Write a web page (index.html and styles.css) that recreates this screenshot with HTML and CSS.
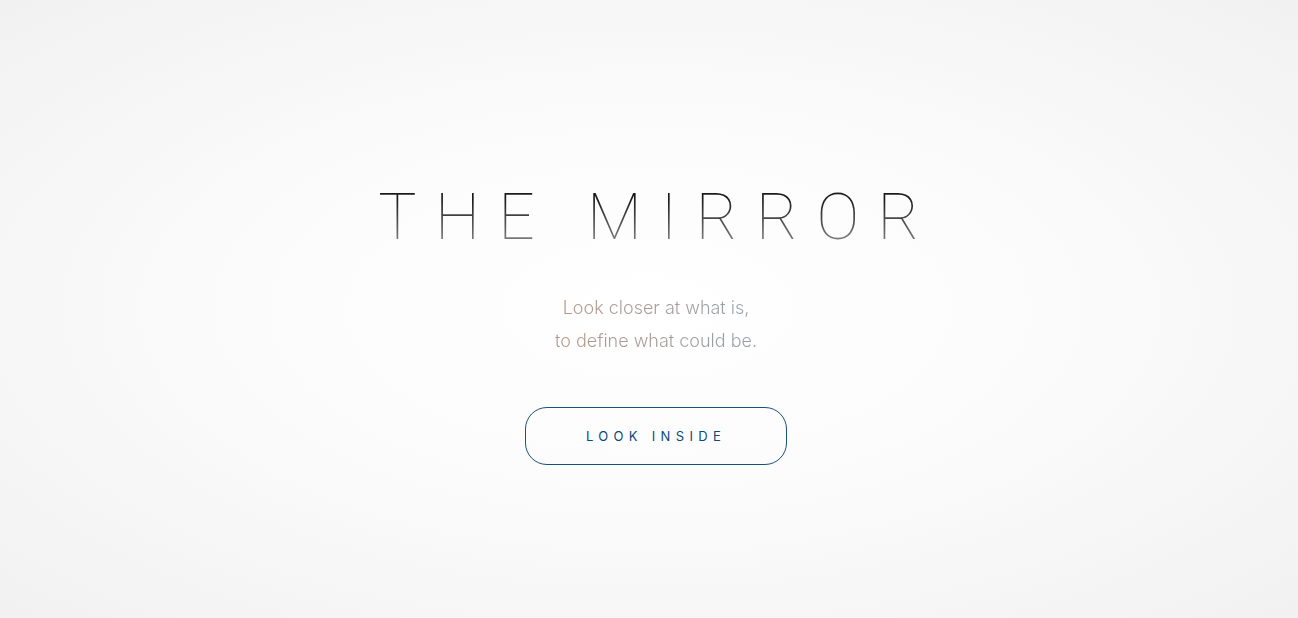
FILE: index.html
```html
<!DOCTYPE html>
<html lang="en">
<head>
<meta charset="utf-8">
<title>The Mirror</title>
<link rel="stylesheet" href="styles.css">
</head>
<body>
<main class="hero">
  <h1 class="title">THE MIRROR</h1>
  <p class="tagline">Look closer at what is,<br>to define what could be.</p>
  <a class="cta" href="#">LOOK INSIDE</a>
</main>
</body>
</html>
```
FILE: styles.css
```css
html, body {
  margin: 0;
  padding: 0;
  height: 100%;
}
body {
  background: radial-gradient(ellipse at 50% 50%, #ffffff 0%, #fbfbfb 45%, #f1f1f1 100%);
  font-family: "Inter", "Roboto", "Liberation Sans", sans-serif;
}
.hero {
  height: 100vh;
  display: flex;
  flex-direction: column;
  align-items: center;
  justify-content: flex-start;
  box-sizing: border-box;
  padding: 186px 0 0 14px;
}
.title {
  margin: 0;
  font-family: "Roboto", "Inter", sans-serif;
  font-weight: 100;
  font-size: 64px;
  line-height: 1;
  letter-spacing: 18.5px;
  padding-left: 4px;
  background: linear-gradient(to bottom, #1a1a1a 20%, #8a8a8a 95%);
  -webkit-background-clip: text;
  background-clip: text;
  color: transparent;
}
.tagline {
  margin: 41px 0 0;
  font-family: "Inter", sans-serif;
  font-weight: 300;
  font-size: 18px;
  line-height: 33px;
  text-align: center;
  background: linear-gradient(to right, #b59a8a, #a39c98 50%, #98a1ad);
  -webkit-background-clip: text;
  background-clip: text;
  color: transparent;
}
.cta {
  margin-top: 50px;
  box-sizing: border-box;
  width: 262px;
  height: 58px;
  border: 1px solid #1d4f7e;
  border-radius: 22px;
  display: flex;
  align-items: center;
  justify-content: center;
  font-family: "Inter", sans-serif;
  font-weight: 400;
  font-size: 13px;
  letter-spacing: 0.41em;
  color: #0b4a7a;
  text-decoration: none;
}
```
